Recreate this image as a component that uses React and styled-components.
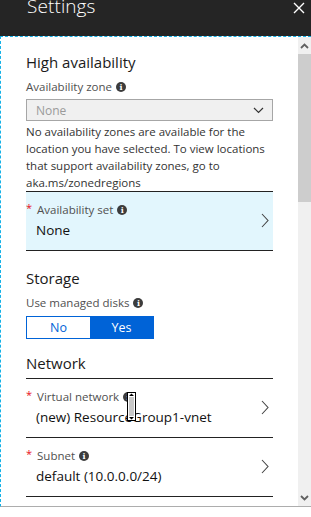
import React from 'react';
import styled, { createGlobalStyle } from 'styled-components';

const GlobalStyle = createGlobalStyle`
  html, body {
    margin: 0;
    padding: 0;
    background: #fff;
  }
  body {
    font-family: 'Open Sans', 'Noto Sans', sans-serif;
    color: #222;
  }
`;

const Blade = styled.div`
  width: 311px;
  height: 517px;
  display: flex;
  flex-direction: column;
  background: #fff;
  overflow: hidden;
`;

const TitleBar = styled.div`
  height: 36px;
  flex: none;
  background: #252525;
  display: flex;
  align-items: flex-start;
  justify-content: space-between;
  padding: 0 6px 0 27px;
  box-sizing: border-box;
  h1 {
    margin: -7px 0 0;
    font-size: 19px;
    font-weight: 300;
    color: #fff;
    letter-spacing: 0.1px;
  }
`;

const CloseButton = styled.button`
  border: 0;
  background: none;
  padding: 0;
  margin-top: 2px;
  width: 12px;
  height: 12px;
  svg {
    display: block;
  }
`;

const Body = styled.div`
  height: 471px;
  flex: none;
  display: flex;
  border-top: 1px dashed #14b1e7;
  border-left: 1px dashed #14b1e7;
  border-bottom: 1px solid #adadad;
  box-sizing: border-box;
  position: relative;
`;

const Content = styled.div`
  flex: 1;
  overflow: hidden;
  padding: 14px 25px 0 25px;
`;

const Scrollbar = styled.div`
  width: 13px;
  flex: none;
  background: #f0f0f0;
  display: flex;
  flex-direction: column;
`;

const ScrollArrow = styled.div`
  height: 17px;
  display: flex;
  align-items: center;
  justify-content: center;
`;

const ScrollThumb = styled.div`
  height: 148px;
  background: #cdcdcd;
`;

const ScrollTrack = styled.div`
  flex: 1;
`;

const SectionTitle = styled.h2`
  margin: 0 0 ${(p) => (p.$ruled ? '0' : '6px')};
  font-size: 15px;
  font-weight: 400;
  line-height: 22px;
  color: #1a1a1a;
  padding-bottom: ${(p) => (p.$ruled ? '4px' : '0')};
  border-bottom: ${(p) => (p.$ruled ? '1px solid #222' : 'none')};
`;

const Section = styled.section`
  margin-top: ${(p) => p.$top || 0}px;
`;

const Label = styled.div`
  display: flex;
  align-items: center;
  gap: 4px;
  font-size: 11.5px;
  line-height: 16px;
  color: #505050;
  margin-bottom: ${(p) => (p.$flush ? 0 : 4)}px;
`;

const Required = styled.span`
  color: #e81123;
  font-size: 11px;
  margin-right: 1px;
  align-self: flex-start;
  line-height: 12px;
`;

const InfoDot = styled.span`
  width: 10px;
  height: 10px;
  border-radius: 50%;
  background: #3c3c3c;
  color: #fff;
  font-size: 8px;
  font-weight: 700;
  font-family: 'DejaVu Serif', serif;
  line-height: 10px;
  text-align: center;
  flex: none;
`;

const Dropdown = styled.div`
  height: 22px;
  box-sizing: border-box;
  border: 1px solid #a6a6a6;
  background: #f0f0f0;
  display: flex;
  align-items: center;
  justify-content: space-between;
  padding: 0 8px 0 9px;
  font-size: 12px;
  color: #9a9a9a;
`;

const HelpText = styled.p`
  margin: 2px 0 0;
  font-size: 11.5px;
  line-height: 17px;
  color: #333;
`;

const PickerRow = styled.div`
  display: flex;
  align-items: center;
  justify-content: space-between;
  padding: 10px 4px 11px 0;
  background: ${(p) => (p.$selected ? '#e2f6fd' : 'transparent')};
  border-top: ${(p) => (p.$first ? '1px solid #222' : 'none')};
  border-bottom: 1px solid #222;
`;

const PickerText = styled.div`
  display: flex;
  flex-direction: column;
  gap: 3px;
`;

const PickerValue = styled.div`
  font-size: 13.5px;
  line-height: 18px;
  color: #111;
  padding-left: 10px;
`;

const Toggle = styled.div`
  display: inline-flex;
  height: 23px;
  margin-top: -2px;
  border: 1px solid #0063d7;
  box-sizing: border-box;
`;

const ToggleOption = styled.div`
  width: ${(p) => p.$width}px;
  display: flex;
  align-items: center;
  justify-content: center;
  font-size: 12.5px;
  background: ${(p) => (p.$active ? '#0063d7' : '#fff')};
  color: ${(p) => (p.$active ? '#fff' : '#0063d7')};
`;

const Cursor = styled.div`
  position: absolute;
  left: 126px;
  top: 355px;
  pointer-events: none;
`;

const Info = () => <InfoDot>i</InfoDot>;

const Chevron = () => (
  <svg width="8" height="15" viewBox="0 0 8 15">
    <path d="M1 1 L7 7.5 L1 14" fill="none" stroke="#444" strokeWidth="1.1" />
  </svg>
);

function Picker({ label, value, selected, first }) {
  return (
    <PickerRow $selected={selected} $first={first}>
      <PickerText>
        <Label $flush>
          <Required>*</Required>
          {label}
          <Info />
        </Label>
        <PickerValue>{value}</PickerValue>
      </PickerText>
      <Chevron />
    </PickerRow>
  );
}

export default function App() {
  return (
    <>
      <GlobalStyle />
      <Blade>
        <TitleBar>
          <h1>Settings</h1>
          <CloseButton aria-label="Close">
            <svg width="12" height="12" viewBox="0 0 12 12">
              <path d="M1 1 L11 11 M11 1 L1 11" stroke="#fff" strokeWidth="1.4" />
            </svg>
          </CloseButton>
        </TitleBar>
        <Body>
          <Content>
            <Section>
              <SectionTitle>High availability</SectionTitle>
              <Label>
                Availability zone <Info />
              </Label>
              <Dropdown>
                None
                <svg width="11" height="7" viewBox="0 0 11 7">
                  <path d="M1 1 L5.5 5.5 L10 1" fill="none" stroke="#333" strokeWidth="1.2" />
                </svg>
              </Dropdown>
              <HelpText>
                No availability zones are available for the location you have
                selected. To view locations that support availability zones, go
                to aka.ms/zonedregions
              </HelpText>
              <Picker label="Availability set" value="None" selected first />
            </Section>
            <Section $top={16}>
              <SectionTitle>Storage</SectionTitle>
              <Label>
                Use managed disks <Info />
              </Label>
              <Toggle>
                <ToggleOption $width={63}>No</ToggleOption>
                <ToggleOption $width={63} $active>
                  Yes
                </ToggleOption>
              </Toggle>
            </Section>
            <Section $top={13}>
              <SectionTitle $ruled>Network</SectionTitle>
              <Picker label="Virtual network" value="(new) ResourceGroup1-vnet" />
              <Picker label="Subnet" value="default (10.0.0.0/24)" />
            </Section>
          </Content>
          <Scrollbar>
            <ScrollArrow>
              <svg width="9" height="6" viewBox="0 0 9 6">
                <path d="M1 5 L4.5 1.5 L8 5" fill="none" stroke="#606060" strokeWidth="1.8" />
              </svg>
            </ScrollArrow>
            <ScrollThumb />
            <ScrollTrack />
            <ScrollArrow>
              <svg width="9" height="6" viewBox="0 0 9 6">
                <path d="M1 1 L4.5 4.5 L8 1" fill="none" stroke="#606060" strokeWidth="1.8" />
              </svg>
            </ScrollArrow>
          </Scrollbar>
          <Cursor>
            <svg width="9" height="29" viewBox="0 0 9 29">
              <rect x="0.5" y="0.5" width="8" height="28" fill="#fff" stroke="#000" />
              <rect x="2" y="5" width="5" height="19" fill="#c8c8c8" />
              <path d="M2 4 L4.5 1.5 L7 4 Z M2 25 L4.5 27.5 L7 25 Z" fill="#000" />
            </svg>
          </Cursor>
        </Body>
      </Blade>
    </>
  );
}
